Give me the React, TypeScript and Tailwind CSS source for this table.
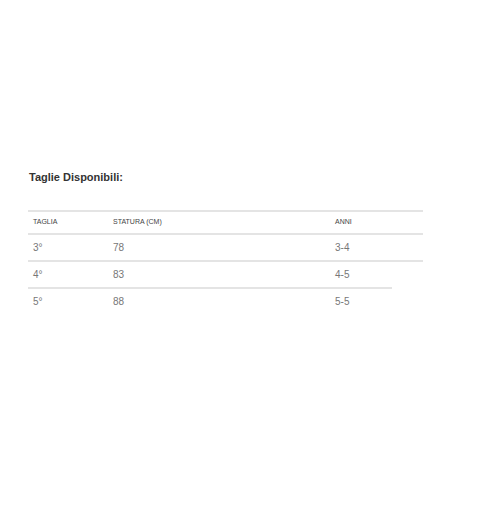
import React from "react";

const rows = [
  { t: "3°", s: "78", a: "3-4" },
  { t: "4°", s: "83", a: "4-5" },
  { t: "5°", s: "88", a: "5-5" },
];

export default function App() {
  return (
    <div
      className="w-[480px] h-[512px] bg-white"
      style={{ fontFamily: '"Liberation Sans", Arial, sans-serif' }}
    >
      <div className="pt-[171px] pl-[29px]">
        <div className="text-[11px] leading-[13px] font-bold text-[#333]">
          Taglie Disponibili:
        </div>
      </div>
      <div className="ml-[28px] mt-[26px] w-[395px] flex flex-col">
        <div className="grid grid-cols-[85px_222px_1fr] items-center h-[23px] border-t-2 border-[#e4e4e4] text-[7px] text-[#444] uppercase">
          <div className="pl-[5px]">Taglia</div>
          <div>Statura (cm)</div>
          <div>Anni</div>
        </div>
        {rows.map((r, i) => (
          <div
            key={r.t}
            className={
              "grid grid-cols-[85px_222px_1fr] items-center h-[27px] border-t-2 border-[#e4e4e4] text-[10px] text-[#777] " +
              (i === 2 ? "w-[364px]" : "w-full")
            }
          >
            <div className="pl-[5px]">{r.t}</div>
            <div>{r.s}</div>
            <div>{r.a}</div>
          </div>
        ))}
      </div>
    </div>
  );
}
